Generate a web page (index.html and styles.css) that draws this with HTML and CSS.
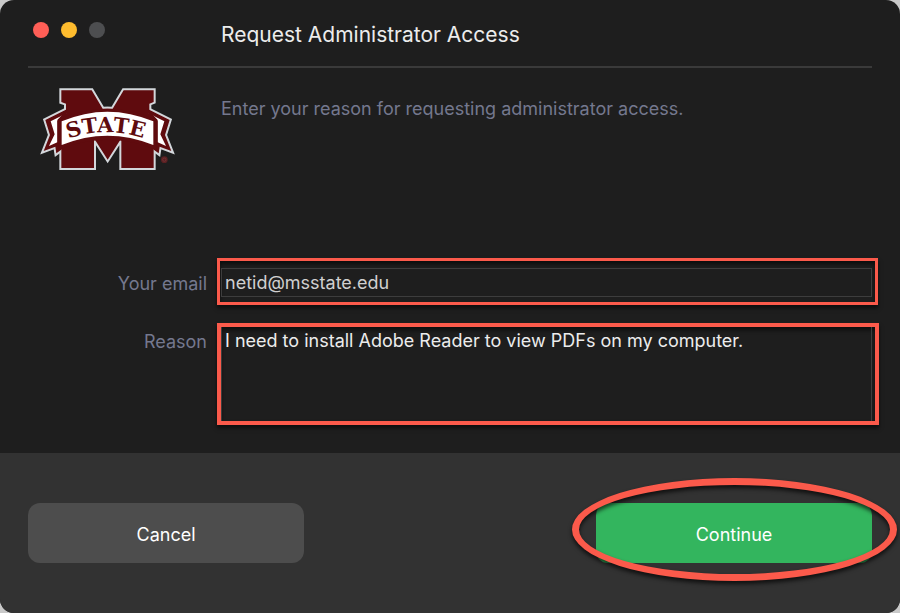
FILE: index.html
```html
<!DOCTYPE html>
<html lang="en">
<head>
    <meta charset="UTF-8">
    <meta name="viewport" content="width=device-width, initial-scale=1.0">
    <title>Request Administrator Access</title>
    <link rel="stylesheet" href="styles.css">
</head>
<body>

    <form class="window">
        <header class="titlebar">
            <div class="lights">
                <span class="light close"></span>
                <span class="light minimize"></span>
                <span class="light"></span>
            </div>
            <h1>Request Administrator Access</h1>
        </header>

        <main class="content">
            <div class="intro">
                <svg class="logo" viewBox="30 39 405 249" role="img" aria-label="Mississippi State">
                    <defs>
                        <g id="shape">
                            <path d="M94 46H185L218 101H248L281 46H371V81L358 86V110L371 220V279H274V190L233 254L192 190V279H94V220L108 110V86L94 81Z"/>
                            <path d="M112 102L46 135L60 180L41 228L76 215L79 235L108 214V110Z"/>
                            <path d="M353 102L419 135L405 180L424 228L389 215L386 235L357 214V110Z"/>
                            <path d="M86 134Q232 68 379 134V224Q232 164 86 224Z"/>
                        </g>
                    </defs>
                    <!-- outline goes under the fill so only the outer edge shows -->
                    <use href="#shape" stroke="#d3d7db" stroke-width="12"/>
                    <use href="#shape" fill="#5f0b0e"/>
                    <!-- ribbon tails -->
                    <path d="M110 115L62 139L74 178L57 213L82 202V137Z" fill="#fff"/>
                    <path d="M355 115L403 139L391 178L408 213L383 202V137Z" fill="#fff"/>
                    <path d="M108 114L87 136V205M357 114L378 136V205" fill="none" stroke="#5f0b0e" stroke-width="9"/>
                    <!-- banner -->
                    <path d="M95 139Q232 81 370 139V210Q232 154 95 210Z" fill="#fff"/>
                    <path id="arc" d="M115 191Q232 149 362 197" fill="none"/>
                    <text class="logo-text"><textPath href="#arc">STATE</textPath></text>
                    <circle cx="403" cy="254" r="10" fill="#5a2022"/>
                    <circle cx="403" cy="254" r="5" fill="none" stroke="#7a3a3c" stroke-width="2"/>
                </svg>
                <p>Enter your reason for requesting administrator access.</p>
            </div>

            <div class="fields">
                <label for="email">Your email</label>
                <div class="highlight email-box">
                    <input type="email" id="email" name="email" value="netid@msstate.edu">
                </div>

                <label for="reason">Reason</label>
                <div class="highlight reason-box">
                    <textarea id="reason" name="reason">I need to install Adobe Reader to view PDFs on my computer.</textarea>
                </div>
            </div>
        </main>

        <footer class="actions">
            <button type="button">Cancel</button>
            <div class="circled">
                <button type="submit" class="primary">Continue</button>
            </div>
        </footer>
    </form>

</body>
</html>
```

FILE: styles.css
```css
* {
    box-sizing: border-box;
}

body {
    margin: 0;
    background-color: #c9c9c9;
    color: #ececec;
    font-family: Inter, "Liberation Sans", sans-serif;
    font-size: 18px;
    line-height: 24px;
}

.window {
    display: flex;
    flex-direction: column;
    min-height: 100vh;
    background-color: #1e1e1e;
    border-radius: 14px;
    overflow: hidden;
}

.titlebar {
    display: grid;
    grid-template-columns: 188px 1fr;
    column-gap: 5px;
    margin: 0 28px;
    padding: 20px 0 16px;
    border-bottom: 2px solid #3a3a3a;
}

    .titlebar h1 {
        margin: 0;
        font-size: 21px;
        font-weight: 400;
        line-height: 30px;
    }

.lights {
    display: flex;
    gap: 12px;
    padding: 2px 5px;
}

.light {
    width: 16px;
    height: 16px;
    border-radius: 50%;
    background-color: #4d4e50;
}

.close {
    background-color: #ff5f57;
}

.minimize {
    background-color: #febc2e;
}

.content {
    flex: 1;
    padding: 20px 21px 28px 28px;
}

.intro {
    display: grid;
    grid-template-columns: 188px 1fr;
    column-gap: 5px;
    min-height: 170px;
    color: #74788e;
}

    .intro p {
        margin: 9px 0;
    }

.logo {
    width: 135px;
    height: 83px;
    margin-left: 12px;
}

.logo-text {
    font-family: "DejaVu Serif", serif;
    font-size: 63px;
    font-weight: bold;
    fill: #5f0b0e;
}

.fields {
    display: grid;
    grid-template-columns: 179px 1fr;
    gap: 18px 10px;
}

    .fields label {
        padding-top: 14px;
        text-align: right;
        color: #74788e;
    }

    .fields label[for="reason"] {
        padding-top: 7px;
    }

    .fields input, .fields textarea {
        display: block;
        width: 100%;
        margin: 0;
        padding: 0 3px;
        border: 1px solid #3d3d3d;
        outline: none;
        background: transparent;
        color: #d0d0d0;
        font: inherit;
    }

    .fields input {
        height: 29px;
    }

    .fields textarea {
        height: 94px;
        padding-top: 2px;
        border-width: 0 1px;
        color: #ececec;
        resize: none;
    }

/* red call-outs round the fields and the button */
.highlight {
    border: 3px solid #fb5a4b;
    box-shadow: 0 3px 4px rgba(0, 0, 0, 0.6), inset 0 3px 4px rgba(0, 0, 0, 0.6);
}

.email-box {
    margin-right: 1px;
    padding: 7px 3px 5px 1px;
}

.reason-box {
    border-width: 4px;
    padding-right: 3px;
}

.actions {
    display: flex;
    justify-content: space-between;
    padding: 50px 28px;
    background-color: #323232;
}

    .actions button {
        width: 276px;
        height: 60px;
        padding: 3px 0 0;
        border: none;
        border-radius: 12px;
        background-color: #4d4d4d;
        color: #fff;
        font: inherit;
        cursor: pointer;
    }

    .actions .primary {
        background-color: #33b55e;
    }

.circled {
    position: relative;
}

    .circled::after {
        content: "";
        position: absolute;
        inset: -25px -25px -18px -24px;
        border: 7px solid #fb5a4b;
        border-radius: 50%;
        filter: drop-shadow(0 3px 2px rgba(0, 0, 0, 0.7));
        pointer-events: none;
    }
```
